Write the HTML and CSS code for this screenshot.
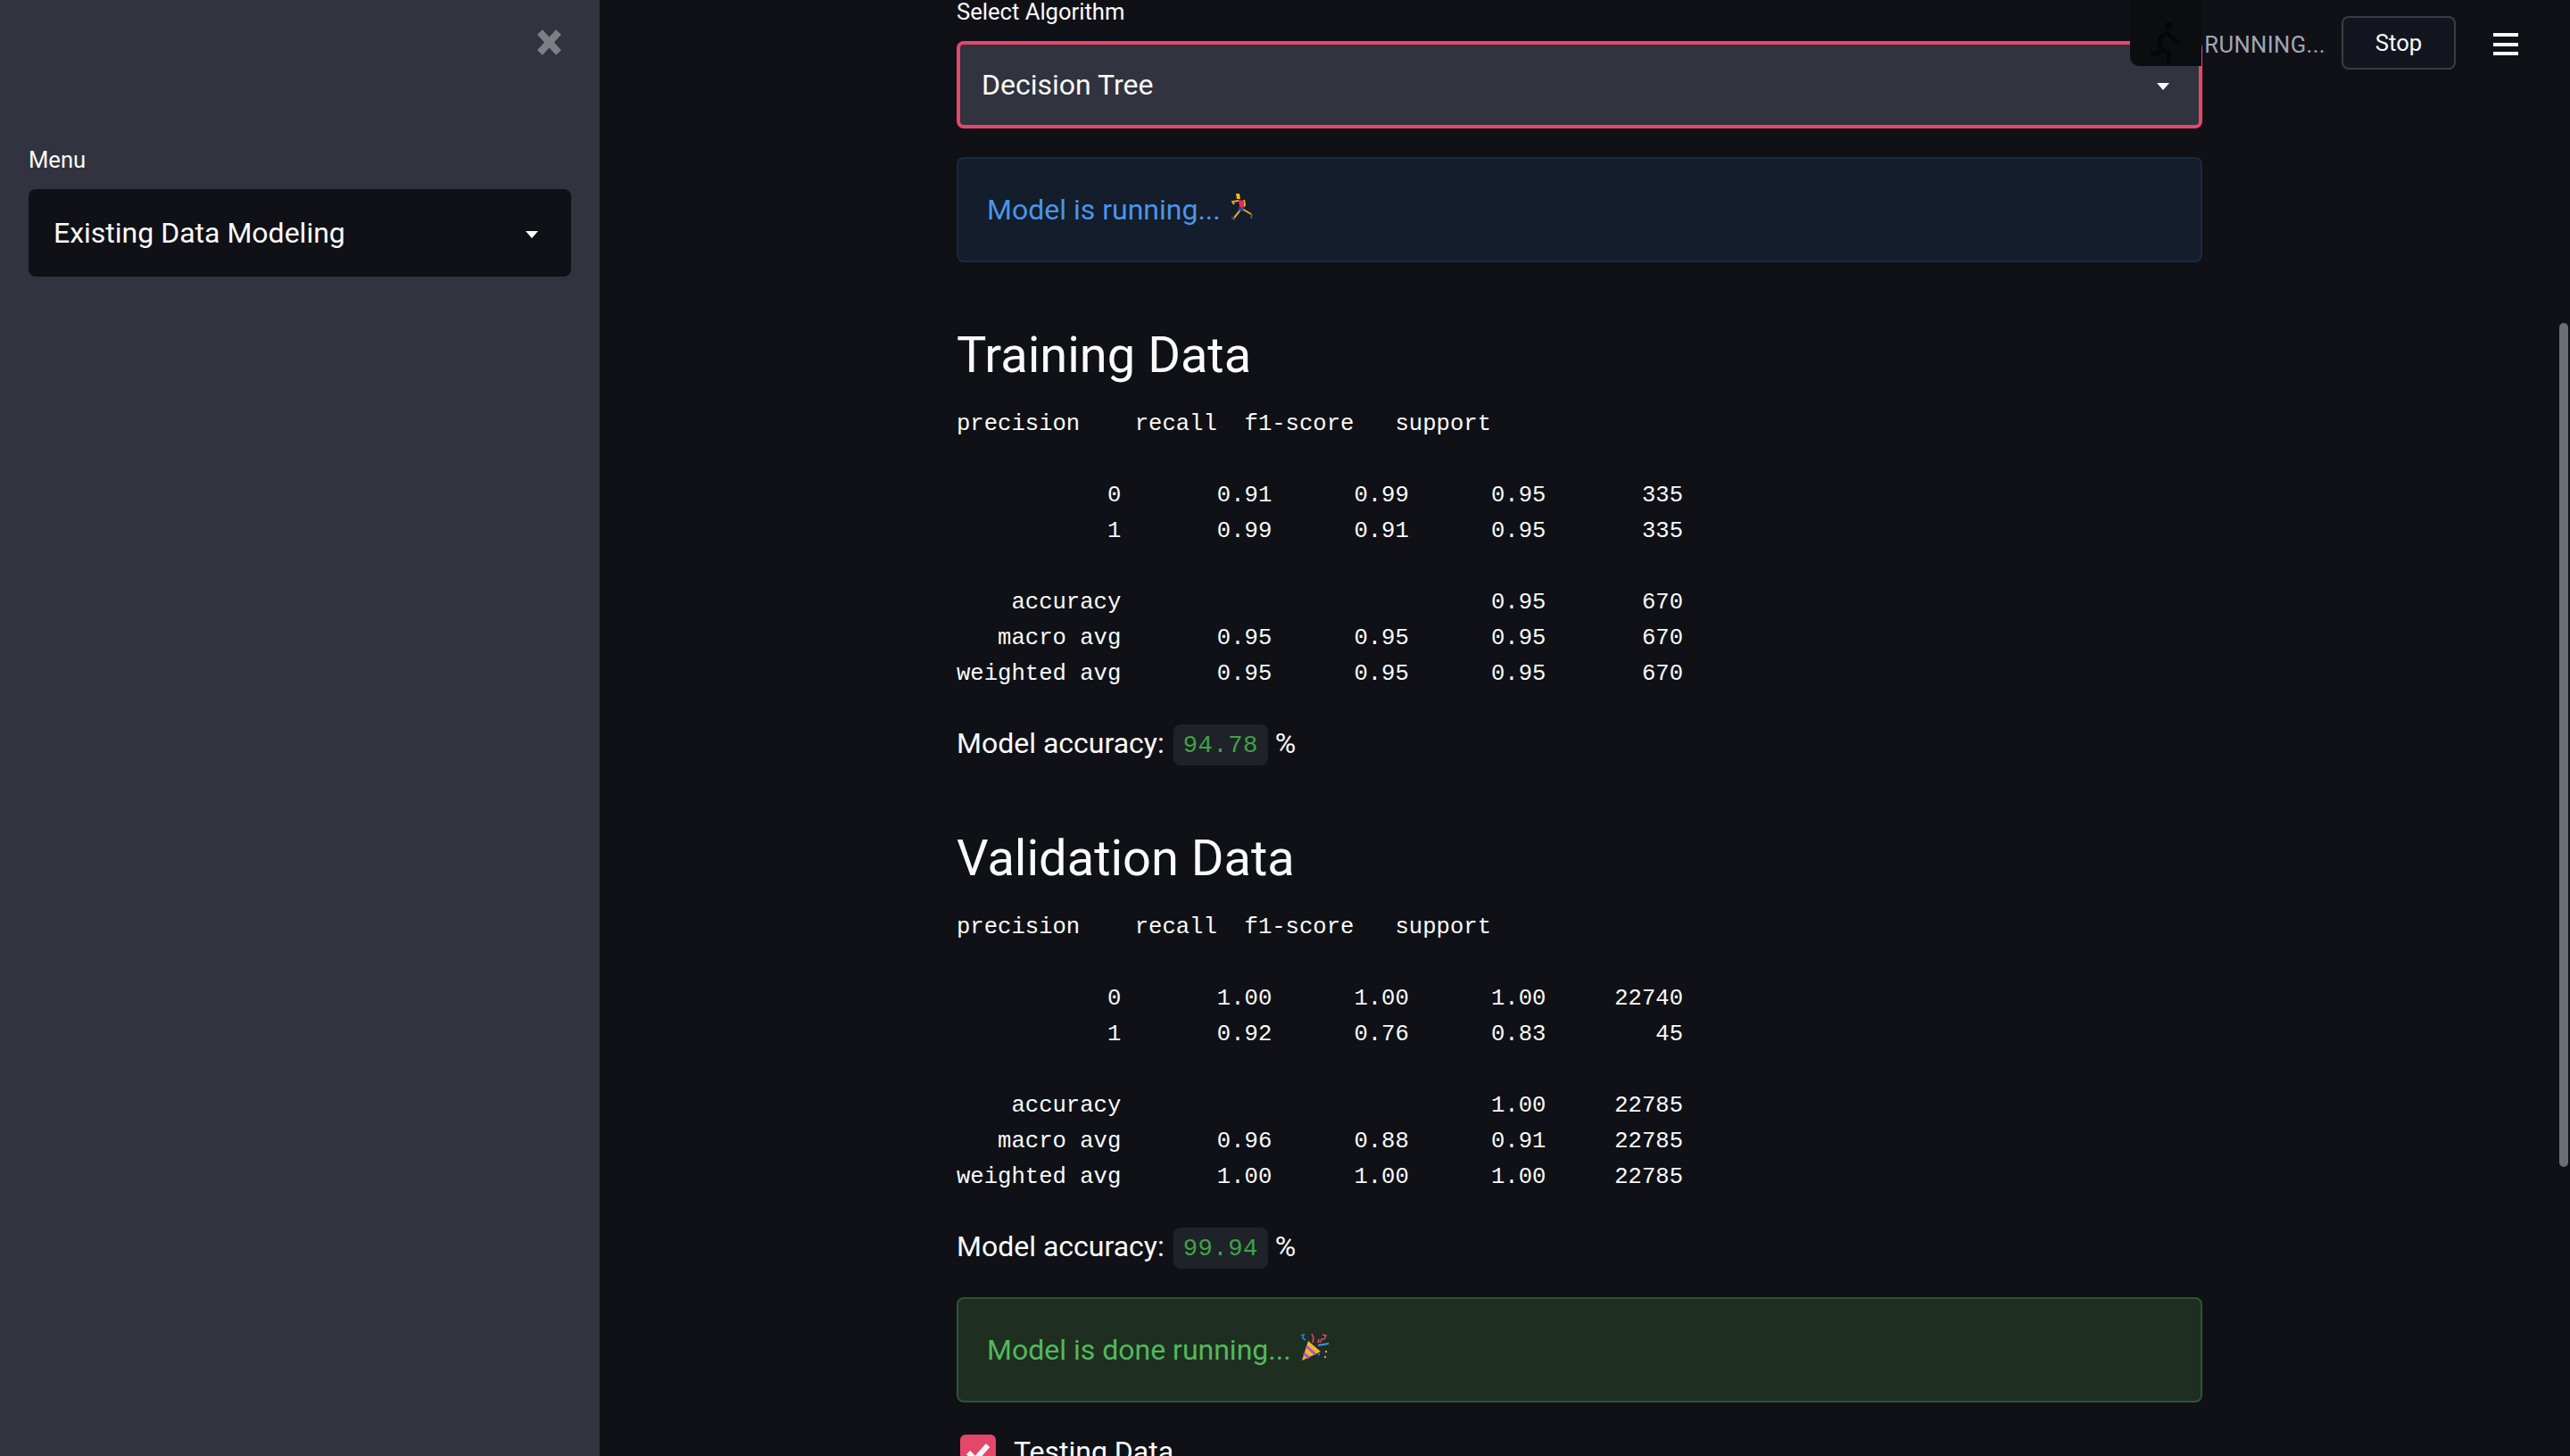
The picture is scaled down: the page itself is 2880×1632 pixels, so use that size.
FILE: index.html
```html
<!DOCTYPE html>
<html>
	<head>
		<meta charset="utf-8">
		<title>Existing Data Modeling</title>
		<link rel="stylesheet" href="styles.css">
	</head>
	<body>
		<div class="app">
			<!-- sidebar -->
			<aside class="sidebar">
				<div class="sidebar-top">
					<svg class="close-icon" viewBox="0 0 29 29"><path d="M4 3 L25 26 M25 3 L4 26" stroke="#7e7f84" stroke-width="8" fill="none"/></svg>
				</div>
				<div class="field-label menu-label">Menu</div>
				<div class="select select-menu">
					<span>Existing Data Modeling</span>
					<i class="caret"></i>
				</div>
			</aside>

			<!-- main column -->
			<main class="main">
				<div class="field-label algo-label">Select Algorithm</div>
				<div class="select select-algo">
					<span>Decision Tree</span>
					<i class="caret"></i>
				</div>

				<div class="alert alert-info">
					<span>Model is running...</span>
					<svg class="emoji-run" viewBox="0 0 24 30">
						<path d="M11 16 L8 21 L3 27" stroke="#f6a81c" stroke-width="2" fill="none"/>
						<path d="M12 17 L17 20 L22 23" stroke="#f6a81c" stroke-width="2" fill="none"/>
						<path d="M8 8 L1 9 L3 12 M14 7 L15 13 L13 15" stroke="#f6a81c" stroke-width="2" fill="none"/>
						<path d="M8 7 L14 8 L14 15 L9 15 Z" fill="#e5266e"/>
						<path d="M9 15 L14 15 L13 20 L7 19 Z" fill="#33489e"/>
						<path d="M5 0 L9 0 L10 6 L6 6 Z" fill="#f8b917"/>
						<path d="M0 27 L4 29 M23 23 L22 28" stroke="#4c5266" stroke-width="2" fill="none"/>
					</svg>
				</div>

				<h2 class="section-title">Training Data</h2>
				<pre class="report">precision    recall  f1-score   support

           0       0.91      0.99      0.95       335
           1       0.99      0.91      0.95       335

    accuracy                           0.95       670
   macro avg       0.95      0.95      0.95       670
weighted avg       0.95      0.95      0.95       670</pre>
				<p class="accuracy">Model accuracy:<code>94.78</code>%</p>

				<h2 class="section-title">Validation Data</h2>
				<pre class="report">precision    recall  f1-score   support

           0       1.00      1.00      1.00     22740
           1       0.92      0.76      0.83        45

    accuracy                           1.00     22785
   macro avg       0.96      0.88      0.91     22785
weighted avg       1.00      1.00      1.00     22785</pre>
				<p class="accuracy">Model accuracy:<code>99.94</code>%</p>

				<div class="alert alert-success">
					<span>Model is done running...</span>
					<svg class="emoji-party" viewBox="0 0 32 32">
						<path d="M9 9 L23 21 L2 31 Z" fill="#f3b52c"/>
						<path d="M7 15 L17 24 M4 23 L10 28" stroke="#a557c9" stroke-width="3" fill="none"/>
						<path d="M13 1 L15 6 L14 11 M25 2 L29 3 L27 7 L24 7 L22 11 M20 11 L21 7" stroke="#e0436a" stroke-width="1.6" fill="none"/>
						<path d="M1 3 L4 2 L3 6 L6 8" stroke="#2f7be0" stroke-width="1.6" fill="none"/>
						<path d="M20 14 L32 12" stroke="#4a90e2" stroke-width="2" fill="none"/>
						<circle cx="29" cy="21" r="1.2" fill="#f0a030"/>
						<circle cx="28" cy="27" r="1.2" fill="#f17ba0"/>
						<circle cx="21" cy="24" r="1.2" fill="#2f7be0"/>
					</svg>
				</div>

				<label class="check-row">
					<span class="check-box">
						<svg viewBox="0 0 40 40"><path d="M9 20 L17 28 L31 12" stroke="#f3f4f7" stroke-width="6" fill="none"/></svg>
					</span>
					<span>Testing Data</span>
				</label>
			</main>

			<!-- toolbar floats over the page -->
			<header class="toolbar">
				<div class="status-box">
					<svg class="status-run" viewBox="0 0 32 47">
						<circle cx="20" cy="4" r="4" fill="#050608"/>
						<path d="M17 11 L10 19 L12 30 L20 34 L20 47 M17 11 L24 16 L31 23 M12 30 L9 35 L0 35" stroke="#050608" stroke-width="4.5" fill="none"/>
					</svg>
				</div>
				<span class="status-text">RUNNING...</span>
				<button class="stop-btn" type="button">Stop</button>
				<div class="burger"><i></i><i></i><i></i></div>
			</header>

			<div class="scroll-thumb"></div>
		</div>
	</body>
</html>
```

FILE: styles.css
```css
body,
h2,
p,
pre {
	margin: 0;
	padding: 0;
}
html,
body {
	height: 100%;
	overflow: hidden;
	background-color: #0f1116;
}
body {
	font-family: "Roboto", "Liberation Sans", sans-serif;
	color: #fafafa;
}
.app {
	display: flex;
	height: 1632px;
	overflow: hidden;
	position: relative;
}

/* sidebar */
.sidebar {
	width: 672px;
	flex: none;
	box-sizing: border-box;
	padding: 33px 32px 0;
	background-color: #31333f;
}
.sidebar-top {
	display: flex;
	justify-content: flex-end;
	padding-right: 10px;
	height: 126px;
}
.close-icon {
	width: 29px;
	height: 29px;
}
.field-label {
	font-size: 25.6px;
	line-height: 26px;
}
.menu-label {
	margin-top: 7px;
	margin-bottom: 20px;
}

/* selects */
.select {
	display: flex;
	align-items: center;
	justify-content: space-between;
	box-sizing: border-box;
	height: 98px;
	font-size: 32px;
	border-radius: 8px;
}
.select-menu {
	background-color: #0f1116;
	padding: 0 37px 0 28px;
}
.select-algo {
	background-color: #31333f;
	border: 4px solid #e5476a;
	padding: 0 33px 0 24px;
}
.caret {
	width: 0;
	height: 0;
	border-left: 7px solid transparent;
	border-right: 7px solid transparent;
	border-top: 8px solid #fafafa;
	margin-top: 4px;
}

/* main column */
.main {
	flex: 1;
	min-width: 0;
	padding: 0 412px 0 400px;
}
.algo-label {
	margin-bottom: 20px;
}
.alert {
	display: flex;
	align-items: center;
	gap: 12px;
	box-sizing: border-box;
	height: 118px;
	margin-top: 32px;
	padding: 0 32px;
	font-size: 32px;
	border-radius: 8px;
	border-width: 2px;
	border-style: solid;
}
.alert-info {
	color: #4b95e8;
	background-color: #131d2b;
	border-color: #1a2a3f;
}
.alert-success {
	color: #53b95a;
	background-color: #1e2f22;
	border-color: #2f5436;
	gap: 10px;
}
.emoji-run {
	width: 24px;
	height: 30px;
	margin-top: -6px;
}
.emoji-party {
	width: 32px;
	height: 32px;
	margin-top: -6px;
}
.section-title {
	font-size: 56px;
	font-weight: 400;
	line-height: 72px;
	margin-top: 68px;
	margin-bottom: 22px;
}
.report {
	font-family: "Liberation Mono", "DejaVu Sans Mono", monospace;
	font-size: 25.6px;
	line-height: 40px;
	color: #fafafa;
}
.accuracy {
	display: flex;
	align-items: center;
	height: 42px;
	margin-top: 36px;
	padding-bottom: 4px;
	font-size: 32px;
}
.accuracy code {
	align-self: flex-start;
	margin: 0 8px 0 10px;
	padding: 2px 11px 0;
	font-family: "Liberation Mono", "DejaVu Sans Mono", monospace;
	font-size: 27.2px;
	line-height: 44px;
	letter-spacing: 0.5px;
	color: #3fa345;
	background-color: #1f2229;
	border-radius: 8px;
}
.check-row {
	display: flex;
	align-items: flex-start;
	gap: 20px;
	margin-top: 36px;
	margin-left: 4px;
	font-size: 32px;
}
.check-box {
	display: block;
	width: 40px;
	height: 40px;
	border-radius: 6px;
	background-color: #e5476a;
}
.check-box svg {
	display: block;
	width: 40px;
	height: 40px;
}

/* toolbar */
.toolbar {
	position: absolute;
	top: 0;
	right: 0;
	display: flex;
	align-items: flex-start;
}
.status-box {
	box-sizing: border-box;
	width: 80px;
	height: 74px;
	padding: 25px 0 0 23px;
	background-color: #0c0d11;
	border-bottom-left-radius: 10px;
}
.status-run {
	display: block;
	width: 32px;
	height: 47px;
}
.status-text {
	margin: 34px 0 0 3px;
	font-size: 25.6px;
	line-height: 32px;
	letter-spacing: 0.4px;
	color: #a3a6b2;
}
.stop-btn {
	box-sizing: border-box;
	width: 128px;
	height: 60px;
	margin: 18px 0 0 18px;
	font-family: inherit;
	font-size: 25.6px;
	color: #fafafa;
	background-color: #13161e;
	border: 2px solid #3a3c45;
	border-radius: 8px;
}
.burger {
	display: flex;
	flex-direction: column;
	justify-content: space-between;
	width: 28px;
	height: 25px;
	margin: 37px 58px 0 42px;
}
.burger i {
	display: block;
	height: 4px;
	background-color: #fafafa;
}
.scroll-thumb {
	position: absolute;
	top: 362px;
	right: 2px;
	width: 10px;
	height: 946px;
	border-radius: 5px;
	background-color: #6c6e73;
}
```
